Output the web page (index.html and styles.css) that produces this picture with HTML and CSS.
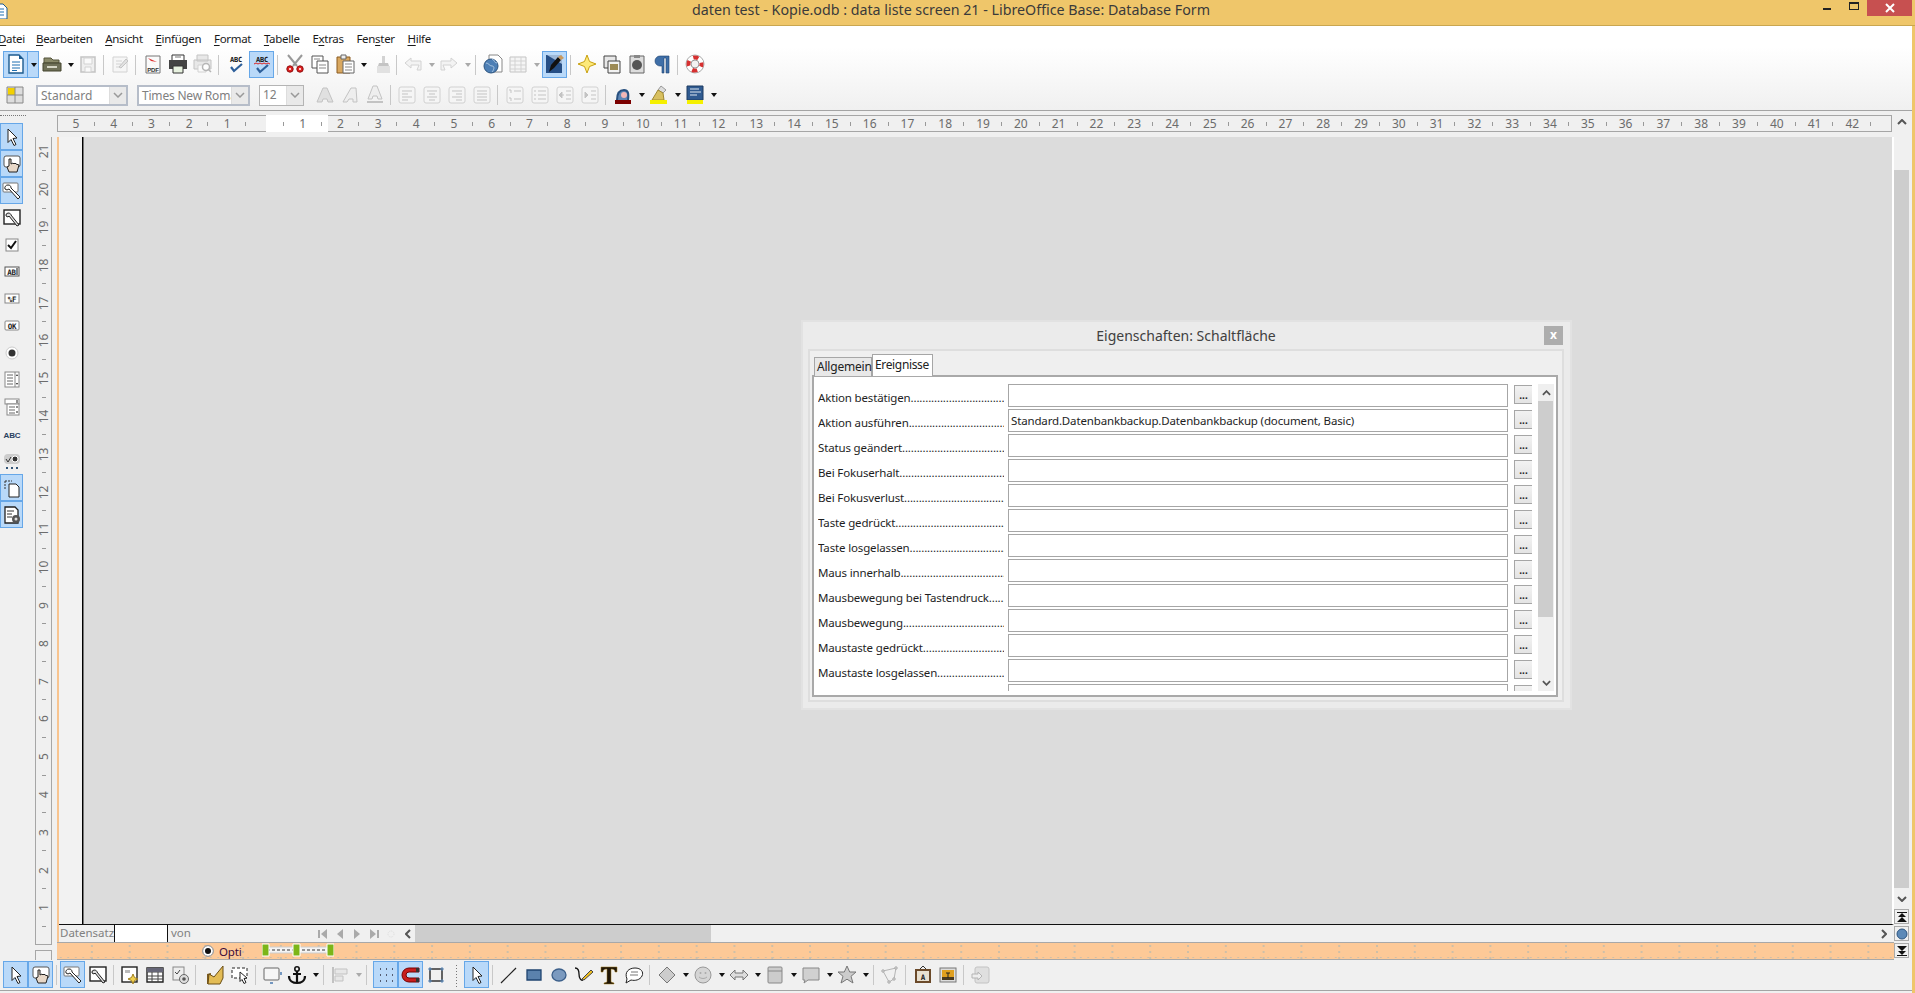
FILE: index.html
```html
<!DOCTYPE html>
<html lang="de">
<head>
    <meta charset="UTF-8" />
    <title>daten test - Kopie.odb : data liste screen 21 - LibreOffice Base: Database Form</title>
    <link rel="stylesheet" href="styles.css">
</head>
<body>
<div class="window">
    <div class="titlebar">
        <svg class="appicon" viewBox="0 0 16 16"><path d="M0 1h11l4 4v11H0z" fill="#fff" stroke="#1d5b8f"/><path d="M2 6h10M2 9h10M2 12h10" stroke="#1d6fb0"/></svg>
        <div class="title">daten test - Kopie.odb : data liste screen 21 - LibreOffice Base: Database Form</div>
        <div class="winctl">
            <span class="min"></span>
            <span class="max"></span>
            <span class="close"><svg viewBox="0 0 10 10" width="10" height="10"><path d="M1 1l8 8M9 1l-8 8" stroke="#fff" stroke-width="2"/></svg></span>
        </div>
    </div>

    <div class="head">
        <div class="menubar">
            <span class="first"><u>D</u>atei</span>
            <span><u>B</u>earbeiten</span>
            <span><u>A</u>nsicht</span>
            <span><u>E</u>infügen</span>
            <span><u>F</u>ormat</span>
            <span><u>T</u>abelle</span>
            <span>E<u>x</u>tras</span>
            <span>Fen<u>s</u>ter</span>
            <span><u>H</u>ilfe</span>
        </div>

        <div class="toolbar row1">
            <span class="btn on"><svg viewBox="0 0 20 20"><path d="M3 1h10l4 4v14H3z" fill="#fff" stroke="#1d5b8f" stroke-width="1.4"/><path d="M13 1l4 4h-4z" fill="#1d5b8f"/><path d="M6 8h8M6 11h8M6 14h8M6 16.500h5" stroke="#1d6fb0"/></svg></span>
            <span class="drop on"><i></i></span>
            <span class="btn"><svg viewBox="0 0 20 20"><path d="M2 4h7l2 2h6v3H2z" fill="#8a8a6a" stroke="#55553c"/><path d="M1 9h18v8H1z" fill="#6f7058" stroke="#45452f"/><path d="M5 12h10v2H5z" fill="#d5d5c5"/></svg></span>
            <span class="drop"><i></i></span>
            <span class="btn off"><svg viewBox="0 0 20 20"><path d="M3 3h14v15H3z" fill="#eee" stroke="#bbb" stroke-width="1.500"/><path d="M6 4h8v6H6zM7 13h6v5H7z" fill="#fafafa" stroke="#ccc"/></svg></span>
            <span class="sep"></span>
            <span class="btn off"><svg viewBox="0 0 20 20"><path d="M3 3h14v15H3z" fill="#f6f6f6" stroke="#ccc"/><path d="M6 7h6M6 10h5M6 13h4" stroke="#ccc"/><path d="M9 13l7-8 2 2-7 7z" fill="#ddd" stroke="#bbb"/></svg></span>
            <span class="sep wide"></span>
            <span class="btn"><svg viewBox="0 0 20 20"><path d="M3 2h14v17H3z" fill="#fafafa" stroke="#777"/><path d="M5 4l9 4-6-1 5 5z" fill="#d33"/><text x="10" y="17.500" class="tiny" text-anchor="middle">PDF</text></svg></span>
            <span class="btn"><svg viewBox="0 0 20 20"><path d="M4 1h12v6H4z" fill="#fff" stroke="#333"/><path d="M1 6h18v9H1z" fill="#444"/><path d="M5 12h10v7H5z" fill="#e8f2e0" stroke="#333"/><path d="M7 3h6" stroke="#777"/></svg></span>
            <span class="btn off"><svg viewBox="0 0 20 20"><path d="M4 1h11v6H4zM1 6h17v9H1z" fill="#e5e5e5" stroke="#bbb"/><path d="M5 11h8v7H5z" fill="#fafafa" stroke="#ccc"/><circle cx="13" cy="13" r="3.500" fill="#fff" stroke="#aaa" stroke-width="1.500"/><path d="M15 15l3 3" stroke="#aaa" stroke-width="1.500"/></svg></span>
            <span class="sep wide"></span>
            <span class="btn"><svg viewBox="0 0 20 20"><text x="10" y="8" class="abc" text-anchor="middle">ABC</text><path d="M5 13l3 4 8-7" fill="none" stroke="#2d5f9a" stroke-width="2.200"/></svg></span>
            <span class="btn on tight"><svg viewBox="0 0 20 20"><text x="10" y="8" class="abc" text-anchor="middle">ABC</text><path d="M2 10l2-1 2 1 2-1 2 1 2-1 2 1 2-1 2 1" fill="none" stroke="#d22"/><path d="M5 14l3 4 8-7" fill="none" stroke="#2d5f9a" stroke-width="2.200"/></svg></span>
            <span class="sep wide"></span>
            <span class="btn"><svg viewBox="0 0 20 20"><path d="M3 1l9 11M17 1L8 12" stroke="#999" stroke-width="2"/><circle cx="5" cy="15" r="3.200" fill="#e02020" stroke="#901010"/><circle cx="15" cy="15" r="3.200" fill="#e02020" stroke="#901010"/><circle cx="5" cy="15" r="1" fill="#fff"/><circle cx="15" cy="15" r="1" fill="#fff"/></svg></span>
            <span class="btn"><svg viewBox="0 0 20 20"><path d="M2 2h11v12H2z" fill="#fff" stroke="#555"/><path d="M7 7h11v12H7z" fill="#fff" stroke="#555"/><path d="M4 5h6M9 11h7M9 14h7" stroke="#888"/></svg></span>
            <span class="btn"><svg viewBox="0 0 20 20"><path d="M2 3h13v16H2z" fill="#d9a860" stroke="#8a5a20"/><path d="M6 1h5v4H6z" fill="#eee" stroke="#666"/><path d="M8 7h11v12H8z" fill="#fff" stroke="#666"/><path d="M10 10h7M10 13h7M10 16h7" stroke="#888"/></svg></span>
            <span class="drop"><i></i></span>
            <span class="btn off ml2"><svg viewBox="0 0 20 20"><path d="M9 2h3v7H9z" fill="#ccc"/><path d="M6 9h9l1 3H5z" fill="#bbb"/><path d="M4 12h13v7H4z" fill="#ddd"/></svg></span>
            <span class="sep thin"></span>
            <span class="btn off"><svg viewBox="0 0 20 20"><path d="M8 4L2 9l6 5v-3h8l-2 5h4V7H8z" fill="#f2f2f2" stroke="#ccc"/></svg></span>
            <span class="drop off"><i></i></span>
            <span class="btn off"><svg viewBox="0 0 20 20"><path d="M12 4l6 5-6 5v-3H4l2 5H2V7h10z" fill="#f2f2f2" stroke="#ccc"/></svg></span>
            <span class="drop off"><i></i></span>
            <span class="sep wide"></span>
            <span class="btn"><svg viewBox="0 0 20 20"><path d="M6 1h9l4 4v13H6z" fill="#fff" stroke="#888"/><circle cx="8" cy="12" r="7" fill="#4d7fb5" stroke="#2d5580"/><path d="M3 9c3 0 3 3 6 3s2 4 0 6M9 5c3 1 2 4 5 4" fill="none" stroke="#a8c4e0"/></svg></span>
            <span class="btn off"><svg viewBox="0 0 20 20"><path d="M2 3h16v15H2z" fill="#f4f4f4" stroke="#bbb"/><path d="M2 7h16M2 11h16M2 15h16M7 3v15M13 3v15" stroke="#ccc"/></svg></span>
            <span class="drop off"><i></i></span>
            <span class="btn on tight"><svg viewBox="0 0 20 20"><path d="M1 1h16v18H1z" fill="#264f86"/><path d="M2 1h15v9z" fill="#9db8d8"/><path d="M4 18l2-7 7-8 3 3-7 8z" fill="#111"/><path d="M13 3l3-2 3 3-3 2z" fill="#c89a60"/></svg></span>
            <span class="sep"></span>
            <span class="btn"><svg viewBox="0 0 20 20"><path d="M10 1l2.500 6.500L19 10l-6.500 2.500L10 19l-2.500-6.500L1 10l6.500-2.500z" fill="#fde97a" stroke="#c8a010"/></svg></span>
            <span class="btn"><svg viewBox="0 0 20 20"><path d="M2 2h12v12H2z" fill="#e8e8e8" stroke="#444"/><path d="M6 7h12v12H6z" fill="#f2f2f2" stroke="#444"/><path d="M8 10h8v6H8z" fill="#9c8a55"/></svg></span>
            <span class="btn"><svg viewBox="0 0 20 20"><path d="M3 2h14v17H3z" fill="#ddd" stroke="#666"/><path d="M7 1h6v3H7z" fill="#888"/><circle cx="10" cy="11" r="5" fill="#555"/></svg></span>
            <span class="btn"><svg viewBox="0 0 20 20"><path d="M10 2H8a5 5 0 0 0 0 10h2v7h2V4h2v15h3V2z" fill="#3f6fa8" stroke="#1d3f6e" stroke-width=".6"/></svg></span>
            <span class="sep wide"></span>
            <span class="btn"><svg viewBox="0 0 20 20"><circle cx="10" cy="10" r="9" fill="#fff" stroke="#aaa"/><circle cx="10" cy="10" r="6.500" fill="none" stroke="#d63030" stroke-width="4" stroke-dasharray="5.200 5" stroke-dashoffset="2.500"/><circle cx="10" cy="10" r="4" fill="#f2f2f2" stroke="#999"/></svg></span>
        </div>

        <div class="toolbar row2">
            <span class="btn"><svg viewBox="0 0 20 20"><path d="M2 2h16v16H2z" fill="#ddd" stroke="#888"/><path d="M3 3h7v7H3z" fill="#f2d000"/><path d="M10 2v16M2 10h16" stroke="#888"/></svg></span>
            <div class="combo w1"><span>Standard</span><b><svg viewBox="0 0 10 6" width="10" height="6"><path d="M1 1l4 4 4-4" fill="none" stroke="#999" stroke-width="1.500"/></svg></b></div>
            <div class="combo w2"><span>Times New Roman</span><b><svg viewBox="0 0 10 6" width="10" height="6"><path d="M1 1l4 4 4-4" fill="none" stroke="#999" stroke-width="1.500"/></svg></b></div>
            <div class="combo w3"><span>12</span><b><svg viewBox="0 0 10 6" width="10" height="6"><path d="M1 1l4 4 4-4" fill="none" stroke="#999" stroke-width="1.500"/></svg></b></div>
            <span class="btn off"><svg viewBox="0 0 20 20"><path d="M8 3h4l6 14h-5l-1-3H8l-1 3H2z" fill="#ddd" stroke="#bbb"/></svg></span>
            <span class="btn off"><svg viewBox="0 0 20 20"><path d="M11 3h5l1 14h-4v-3H9l-2 3H3z" fill="#eee" stroke="#bbb"/></svg></span>
            <span class="btn off"><svg viewBox="0 0 20 20"><path d="M8 1h4l5 13h-4l-1-3H8l-1 3H3z" fill="#eee" stroke="#bbb"/><path d="M2 17h16" stroke="#bbb" stroke-width="2"/></svg></span>
            <span class="sep"></span>
            <span class="btn off"><svg viewBox="0 0 20 20"><rect x="2" y="2" width="16" height="16" rx="2" fill="#f6f6f6" stroke="#ccc"/><path d="M5 6h10M5 9h6M5 12h10M5 15h6" stroke="#bbb"/></svg></span>
            <span class="btn off"><svg viewBox="0 0 20 20"><rect x="2" y="2" width="16" height="16" rx="2" fill="#f6f6f6" stroke="#ccc"/><path d="M5 6h10M7 9h6M5 12h10M7 15h6" stroke="#bbb"/></svg></span>
            <span class="btn off"><svg viewBox="0 0 20 20"><rect x="2" y="2" width="16" height="16" rx="2" fill="#f6f6f6" stroke="#ccc"/><path d="M5 6h10M9 9h6M5 12h10M9 15h6" stroke="#bbb"/></svg></span>
            <span class="btn off"><svg viewBox="0 0 20 20"><rect x="2" y="2" width="16" height="16" rx="2" fill="#f6f6f6" stroke="#ccc"/><path d="M5 6h10M5 9h10M5 12h10M5 15h10" stroke="#bbb"/></svg></span>
            <span class="sep wide"></span>
            <span class="btn off"><svg viewBox="0 0 20 20"><rect x="2" y="2" width="16" height="16" rx="2" fill="#f6f6f6" stroke="#ccc"/><path d="M9 6h7M9 14h7M4 5h2v3M4 13h2v3" fill="none" stroke="#bbb"/></svg></span>
            <span class="btn off"><svg viewBox="0 0 20 20"><rect x="2" y="2" width="16" height="16" rx="2" fill="#f6f6f6" stroke="#ccc"/><path d="M8 6h8M8 10h8M8 14h8M4 6h2M4 10h2M4 14h2" stroke="#bbb"/></svg></span>
            <span class="btn off"><svg viewBox="0 0 20 20"><rect x="2" y="2" width="16" height="16" rx="2" fill="#f6f6f6" stroke="#ccc"/><path d="M9 10l-5 0M4 10l3-3v6z" fill="#bbb" stroke="#bbb"/><path d="M11 6h5M11 10h5M11 14h5" stroke="#bbb"/></svg></span>
            <span class="btn off"><svg viewBox="0 0 20 20"><rect x="2" y="2" width="16" height="16" rx="2" fill="#f6f6f6" stroke="#ccc"/><path d="M8 10l-3-3v6z" fill="#bbb" stroke="#bbb"/><path d="M11 6h5M11 10h5M11 14h5" stroke="#bbb"/></svg></span>
            <span class="sep gap"></span>
            <span class="btn"><svg viewBox="0 0 20 20"><path d="M4 15c0-7 3-10 7-10s5 3 4 10" fill="#5d86b5" stroke="#28507f" stroke-width="2"/><circle cx="11" cy="10" r="3" fill="#f2b6b6"/><path d="M2 15h16v4H2z" fill="#7b0000"/></svg></span>
            <span class="drop"><i></i></span>
            <span class="btn"><svg viewBox="0 0 20 20"><path d="M12 1l5 4-3 3-5-3z" fill="#ddd" stroke="#999"/><path d="M9 5l5 3 1 7H3z" fill="#d8c060" stroke="#a08830"/><path d="M1 15h17v4H1z" fill="#f5f000"/></svg></span>
            <span class="drop"><i></i></span>
            <span class="btn"><svg viewBox="0 0 20 20"><path d="M2 1h16v14H2z" fill="#2f5a90" stroke="#1d3a60"/><path d="M5 4h9M5 7h11M5 10h7" stroke="#dfe8f2"/><path d="M2 15h16v4H2z" fill="#f5f000"/></svg></span>
            <span class="drop"><i></i></span>
        </div>
    </div>

    <div class="upper">
        <div class="leftcol">
            <div class="sidetools">
                <div class="handle"></div>
                <span class="sbtn on"><svg viewBox="0 0 20 20"><path d="M6 2l9 9-4 .5 3 6-2 1-3-6-3 3z" fill="#fff" stroke="#222"/></svg></span>
                <span class="sbtn on"><svg viewBox="0 0 20 20"><rect x="2" y="2" width="16" height="11" rx="2" fill="#fff" stroke="#555"/><path d="M7 5v7l-2 1 2 5h8l2-7-3-1-1-1-1 1-1-1-2 1V5z" fill="#e8d8c8" stroke="#222"/></svg></span>
                <span class="sbtn on"><svg viewBox="0 0 20 20"><rect x="1" y="2" width="15" height="9" rx="1" fill="#fff" stroke="#777"/><path d="M6 4a3 3 0 0 0-3 4l2 1 2-1 9 10 2-2-9-9c0-2-1-3-3-3z" fill="#fff" stroke="#222"/></svg></span>
                <span class="sbtn"><svg viewBox="0 0 20 20"><rect x="2" y="2" width="16" height="14" fill="#fff" stroke="#222" stroke-width="1.400"/><path d="M6 5a2.500 2.500 0 0 0-2 3l2 1 1-1 8 10 2-1-8-10c0-1-1-2-3-2z" fill="#ddd" stroke="#222"/></svg></span>
                <span class="sbtn"><svg viewBox="0 0 20 20"><rect x="4" y="4" width="12" height="12" fill="#fff" stroke="#888"/><path d="M6 10l3 3 5-7" fill="none" stroke="#111" stroke-width="2"/></svg></span>
                <span class="sbtn"><svg viewBox="0 0 20 20"><rect x="3" y="5" width="14" height="9" fill="#fff" stroke="#555"/><text x="9.500" y="13" class="ctl" text-anchor="middle">AB</text><path d="M15 6v7" stroke="#111"/></svg></span>
                <span class="sbtn"><svg viewBox="0 0 20 20"><rect x="3" y="5" width="14" height="9" fill="#fff" stroke="#888"/><text x="10" y="13" class="ctl" text-anchor="middle">%F</text></svg></span>
                <span class="sbtn"><svg viewBox="0 0 20 20"><rect x="3" y="5" width="14" height="9" rx="1" fill="#fff" stroke="#888"/><text x="10" y="13" class="ctl" text-anchor="middle">OK</text></svg></span>
                <span class="sbtn"><svg viewBox="0 0 20 20"><circle cx="10" cy="10" r="6" fill="#fff" stroke="#ccc"/><circle cx="10" cy="10" r="3.500" fill="#333"/></svg></span>
                <span class="sbtn"><svg viewBox="0 0 20 20"><rect x="3" y="2" width="14" height="15" fill="#fff" stroke="#888"/><path d="M5 5h6M5 8h6M5 11h6M5 14h6" stroke="#666"/><path d="M13 2v15" stroke="#888"/><path d="M15 4l-1 2h2zM15 15l-1-2h2z" fill="#222"/></svg></span>
                <span class="sbtn"><svg viewBox="0 0 20 20"><rect x="3" y="2" width="14" height="5" fill="#fff" stroke="#888"/><rect x="5" y="7" width="12" height="11" fill="#fff" stroke="#888"/><path d="M7 10h6M7 13h6M7 16h6" stroke="#666"/><path d="M15 3v3M15 9v2M15 14v2" stroke="#222"/></svg></span>
                <span class="sbtn"><svg viewBox="0 0 20 20"><text x="10" y="14" class="abclbl" text-anchor="middle">ABC</text></svg></span>
                <span class="sbtn"><svg viewBox="0 0 20 20"><rect x="2" y="3" width="16" height="10" rx="4" fill="#ccc"/><circle cx="13" cy="8" r="3" fill="#333" stroke="#fff"/><path d="M4 8l2 3 3-5" fill="none" stroke="#333"/><path d="M4 17h2M9 17h2M14 17h2" stroke="#335577" stroke-width="2"/></svg></span>
                <span class="sbtn on"><svg viewBox="0 0 20 20"><path d="M3 3h7" stroke="#333" stroke-dasharray="2 1"/><path d="M3 3v9" stroke="#333" stroke-dasharray="2 1"/><path d="M7 6h7l3 3v10H7z" fill="#fff" stroke="#222"/></svg></span>
                <span class="sbtn on"><svg viewBox="0 0 20 20"><path d="M3 2h10l3 3v13H3z" fill="#fff" stroke="#222" stroke-width="1.300"/><path d="M5 6h7M5 9h5M5 12h5" stroke="#333"/><circle cx="14" cy="14" r="4" fill="#555"/><circle cx="14" cy="14" r="1.500" fill="#ddd"/></svg></span>
            </div>
            <div class="vruler-wrap">
                <div class="vruler">
                    <div><span>21</span></div><div><span>20</span></div><div><span>19</span></div><div><span>18</span></div><div><span>17</span></div>
                    <div><span>16</span></div><div><span>15</span></div><div><span>14</span></div><div><span>13</span></div><div><span>12</span></div>
                    <div><span>11</span></div><div><span>10</span></div><div><span>9</span></div><div><span>8</span></div><div><span>7</span></div>
                    <div><span>6</span></div><div><span>5</span></div><div><span>4</span></div><div><span>3</span></div><div><span>2</span></div>
                    <div><span>1</span></div>
                </div>
                <div class="vruler-end"></div>
            </div>
        </div>

        <div class="maincol">
            <div class="hruler-row">
                <div class="hruler">
                    <div class="hmargin"></div>
                    <span>5</span><span>4</span><span>3</span><span>2</span><span>1</span><span></span>
                    <span>1</span><span>2</span><span>3</span><span>4</span><span>5</span><span>6</span><span>7</span><span>8</span><span>9</span><span>10</span>
                    <span>11</span><span>12</span><span>13</span><span>14</span><span>15</span><span>16</span><span>17</span><span>18</span><span>19</span><span>20</span>
                    <span>21</span><span>22</span><span>23</span><span>24</span><span>25</span><span>26</span><span>27</span><span>28</span><span>29</span><span>30</span>
                    <span>31</span><span>32</span><span>33</span><span>34</span><span>35</span><span>36</span><span>37</span><span>38</span><span>39</span><span>40</span>
                    <span>41</span><span>42</span>
                </div>
            </div>

            <div class="docpane">
                <div class="canvas">
                    <div class="gutter"></div>
                    <div class="sheet"></div>

                    <div class="dialog">
                        <div class="dlg-title">
                            <span>Eigenschaften: Schaltfläche</span>
                            <b class="dlg-close">x</b>
                        </div>
                        <div class="dlg-panel">
                            <div class="tabs">
                                <span class="tab">Allgemein</span>
                                <span class="tab active">Ereignisse</span>
                            </div>
                            <div class="tabbody">
                                <div class="rows">
                                    <div class="row"><label>Aktion bestätigen</label><input type="text" value=""><button>...</button></div>
                                    <div class="row"><label>Aktion ausführen</label><input type="text" value="Standard.Datenbankbackup.Datenbankbackup (document, Basic)"><button>...</button></div>
                                    <div class="row"><label>Status geändert</label><input type="text" value=""><button>...</button></div>
                                    <div class="row"><label>Bei Fokuserhalt</label><input type="text" value=""><button>...</button></div>
                                    <div class="row"><label>Bei Fokusverlust</label><input type="text" value=""><button>...</button></div>
                                    <div class="row"><label>Taste gedrückt</label><input type="text" value=""><button>...</button></div>
                                    <div class="row"><label>Taste losgelassen</label><input type="text" value=""><button>...</button></div>
                                    <div class="row"><label>Maus innerhalb</label><input type="text" value=""><button>...</button></div>
                                    <div class="row"><label>Mausbewegung bei Tastendruck</label><input type="text" value=""><button>...</button></div>
                                    <div class="row"><label>Mausbewegung</label><input type="text" value=""><button>...</button></div>
                                    <div class="row"><label>Maustaste gedrückt</label><input type="text" value=""><button>...</button></div>
                                    <div class="row"><label>Maustaste losgelassen</label><input type="text" value=""><button>...</button></div>
                                    <div class="row"><label class="blank"></label><input type="text" value=""><button></button></div>
                                </div>
                                <div class="dlg-scroll">
                                    <svg class="dlg-arrow" viewBox="0 0 10 6"><path d="M1 5l4-4 4 4" fill="none" stroke="#555" stroke-width="2"/></svg>
                                    <div class="dlg-thumb"></div>
                                    <svg class="dlg-arrow down" viewBox="0 0 10 6"><path d="M1 1l4 4 4-4" fill="none" stroke="#555" stroke-width="2"/></svg>
                                </div>
                            </div>
                        </div>
                    </div>
                </div>

                <div class="hbar">
                    <div class="recbar">
                        <span class="rec-label">Datensatz</span>
                        <span class="rec-input"></span>
                        <span class="rec-von">von</span>
                        <span class="rec-nav">
                            <svg viewBox="0 0 12 12"><path d="M2 2v8" stroke="#aaa" stroke-width="2"/><path d="M10 1v10L4 6z" fill="#aaa"/></svg>
                            <svg viewBox="0 0 12 12"><path d="M9 1v10L3 6z" fill="#aaa"/></svg>
                            <svg viewBox="0 0 12 12"><path d="M3 1v10l6-5z" fill="#aaa"/></svg>
                            <svg viewBox="0 0 12 12"><path d="M10 2v8" stroke="#aaa" stroke-width="2"/><path d="M2 1v10l6-5z" fill="#aaa"/></svg>
                            <svg viewBox="0 0 12 12"><circle cx="6" cy="6" r="3" fill="none" stroke="#ddd" stroke-dasharray="1 1"/></svg>
                        </span>
                    </div>
                    <div class="hscroll">
                        <svg viewBox="0 0 6 10" width="6" height="10"><path d="M5 1L1 5l4 4" fill="none" stroke="#555" stroke-width="2"/></svg>
                        <div class="hthumb"></div>
                        <svg viewBox="0 0 6 10" width="6" height="10" class="hright"><path d="M1 1l4 4-4 4" fill="none" stroke="#555" stroke-width="2"/></svg>
                    </div>
                </div>
            </div>

            <div class="strip">
                <span class="radio"></span>
                <span class="opti">Opti</span>
                <svg class="slider" viewBox="0 0 72 14" width="72" height="14">
                    <path d="M3 4h66v6H3z" fill="#f4f4f4" stroke="#ccc"/>
                    <path d="M5 7h62" stroke="#333" stroke-dasharray="3 2"/>
                    <path d="M0 1h7v12H0zM31 1h7v12h-7zM65 1h7v12h-7z" fill="#7cb518" stroke="#fff"/>
                </svg>
            </div>
        </div>

        <div class="vscroll">
            <svg class="up" viewBox="0 0 10 6" width="10" height="6"><path d="M1 5l4-4 4 4" fill="none" stroke="#555" stroke-width="2"/></svg>
            <div class="vthumb"></div>
            <svg class="dn" viewBox="0 0 10 6" width="10" height="6"><path d="M1 1l4 4 4-4" fill="none" stroke="#555" stroke-width="2"/></svg>
            <span class="pagebtn"><svg viewBox="0 0 12 12" width="12" height="12"><path d="M1 1h10v1H1zM6 2l4 4H2zM6 6l5 5H1z" fill="#111"/></svg></span>
            <span class="pagebtn"><svg viewBox="0 0 12 12" width="12" height="12"><circle cx="6" cy="6" r="5" fill="#5d8ab8" stroke="#2d5580"/></svg></span>
            <span class="pagebtn"><svg viewBox="0 0 12 12" width="12" height="12"><path d="M1 1h10L6 6zM2 6h8l-4 4zM1 10h10v1H1z" fill="#111"/></svg></span>
        </div>
    </div>

    <div class="toolbar bottom">
        <span class="btn on"><svg viewBox="0 0 20 20"><path d="M6 2l9 9-4 .5 3 6-2 1-3-6-3 3z" fill="#fff" stroke="#222"/></svg></span>
        <span class="btn on"><svg viewBox="0 0 20 20"><rect x="2" y="2" width="16" height="11" rx="2" fill="#fff" stroke="#555"/><path d="M7 5v7l-2 1 2 5h8l2-7-3-1-1-1-1 1-1-1-2 1V5z" fill="#e8d8c8" stroke="#222"/></svg></span>
        <span class="sep"></span>
        <span class="btn on"><svg viewBox="0 0 20 20"><rect x="1" y="2" width="15" height="9" rx="1" fill="#fff" stroke="#777"/><path d="M6 4a3 3 0 0 0-3 4l2 1 2-1 9 10 2-2-9-9c0-2-1-3-3-3z" fill="#fff" stroke="#222"/></svg></span>
        <span class="btn"><svg viewBox="0 0 20 20"><rect x="2" y="2" width="16" height="14" fill="#fff" stroke="#222" stroke-width="1.400"/><path d="M6 5a2.500 2.500 0 0 0-2 3l2 1 1-1 8 10 2-1-8-10c0-1-1-2-3-2z" fill="#ddd" stroke="#222"/></svg></span>
        <span class="sep"></span>
        <span class="btn"><svg viewBox="0 0 20 20"><rect x="2" y="2" width="15" height="15" fill="#fff" stroke="#222" stroke-width="1.400"/><path d="M5 5h5v3H5z" fill="#bbb"/><path d="M13 9l1.500 3.500L18 14l-3.500 1.500L13 19l-1.500-3.500L8 14l3.500-1.500z" fill="#f0d050" stroke="#a08020"/></svg></span>
        <span class="btn"><svg viewBox="0 0 20 20"><path d="M2 3h16v14H2z" fill="#fff" stroke="#222" stroke-width="1.400"/><path d="M2 7h16M2 11h16M2 14h16M7 3v14M13 3v14" stroke="#444"/><path d="M2 3h16v4H2z" fill="#667"/></svg></span>
        <span class="btn"><svg viewBox="0 0 20 20"><rect x="3" y="2" width="11" height="13" fill="#eee" stroke="#888"/><path d="M5 7l2 2 3-4" fill="none" stroke="#444"/><circle cx="14" cy="14" r="4.500" fill="#ddd" stroke="#666"/><circle cx="14" cy="14" r="1.800" fill="#555"/></svg></span>
        <span class="sep"></span>
        <span class="btn ml3"><svg viewBox="0 0 20 20"><path d="M2 9l4-1 0 11H2z" fill="#7a5a20"/><path d="M4 9l5 3 9-11v12l-3 6H3z" fill="#e3bc55" stroke="#6b4f16"/></svg></span>
        <span class="btn"><svg viewBox="0 0 20 20"><path d="M2 3h15v10H2z" fill="#fff" stroke="#222" stroke-dasharray="3 2"/><path d="M10 7l7 6-3 .5 2 4-2 1-2-4-2 2z" fill="#fff" stroke="#222"/></svg></span>
        <span class="sep"></span>
        <span class="btn"><svg viewBox="0 0 20 20"><rect x="2" y="3" width="15" height="12" rx="1" fill="#f6f6f6" stroke="#666"/><path d="M19 7v3M8 18h3" stroke="#4a7ab0" stroke-width="1.500"/></svg></span>
        <span class="btn"><svg viewBox="0 0 20 20"><circle cx="10" cy="4" r="2.200" fill="none" stroke="#111" stroke-width="1.600"/><path d="M10 6v12M6 9h8" stroke="#111" stroke-width="2.200"/><path d="M2 11c0 5 4 7 8 7s8-2 8-7" fill="none" stroke="#111" stroke-width="2.200"/></svg></span>
        <span class="drop"><i></i></span>
        <span class="sep"></span>
        <span class="btn off"><svg viewBox="0 0 20 20"><path d="M3 2v16" stroke="#aaa" stroke-width="1.500"/><path d="M5 4h12v5H5zM5 11h8v5H5z" fill="#e6e6e6" stroke="#bbb"/></svg></span>
        <span class="drop off"><i></i></span>
        <span class="sep"></span>
        <span class="btn on ml3"><svg viewBox="0 0 20 20"><path d="M4 4h1M10 4h1M16 4h1M4 10h1M10 10h1M16 10h1M4 16h1M10 16h1M16 16h1" stroke="#334" stroke-width="1.500"/></svg></span>
        <span class="btn on"><svg viewBox="0 0 20 20"><path d="M18 3H8a7 7 0 0 0 0 14h10v-4H8a3 3 0 0 1 0-6h10z" fill="#c81e1e" stroke="#700"/><path d="M15 3h3v4h-3zM15 13h3v4h-3z" fill="#333"/></svg></span>
        <span class="btn"><svg viewBox="0 0 20 20"><path d="M4 4h12v12H4z" fill="none" stroke="#333" stroke-width="1.500"/><path d="M2 4h4M14 4h4M2 16h4M14 16h4M4 2v4M4 14v4M16 2v4M16 14v4" stroke="#5a88b8"/></svg></span>
        <span class="grip"></span>
        <span class="btn on"><svg viewBox="0 0 20 20"><path d="M6 2l9 9-4 .5 3 6-2 1-3-6-3 3z" fill="#fff" stroke="#222"/></svg></span>
        <span class="sep"></span>
        <span class="btn"><svg viewBox="0 0 20 20"><path d="M2 18L17 3" stroke="#222" stroke-width="1.200"/></svg></span>
        <span class="btn"><svg viewBox="0 0 20 20"><path d="M3 5h14v10H3z" fill="#5b82ad" stroke="#1f4470" stroke-width="1.300"/></svg></span>
        <span class="btn"><svg viewBox="0 0 20 20"><ellipse cx="10" cy="10" rx="7" ry="6" fill="#7b9abf" stroke="#3b5f8a" stroke-width="1.300"/></svg></span>
        <span class="btn"><svg viewBox="0 0 20 20"><path d="M1 3c3 0 4 2 4 6s2 7 4 6" fill="none" stroke="#111" stroke-width="1.300"/><path d="M8 14l9-9 2 2-9 8z" fill="#f0c020" stroke="#444"/></svg></span>
        <span class="btn"><svg viewBox="0 0 20 20"><path d="M2 2h16v5h-2c0-2-1-3-4-3v13l3 1v1H5v-1l3-1V4C5 4 4 5 4 7H2z" fill="#1f1608" stroke="#a07818" stroke-width=".5"/></svg></span>
        <span class="btn"><svg viewBox="0 0 20 20"><path d="M3 14c-3-7 2-11 8-11s9 4 7 8-7 5-11 4l-5 3z" fill="#fff" stroke="#222"/><path d="M7 7h7M6 10h8" stroke="#777"/></svg></span>
        <span class="sep wide"></span>
        <span class="btn"><svg viewBox="0 0 20 20"><path d="M10 2l8 8-8 8-8-8z" fill="#ccc" stroke="#777"/></svg></span>
        <span class="drop"><i></i></span>
        <span class="btn"><svg viewBox="0 0 20 20"><circle cx="10" cy="10" r="8" fill="#d5d5d5" stroke="#999"/><circle cx="7.500" cy="8" r="1" fill="#aaa"/><circle cx="12.500" cy="8" r="1" fill="#aaa"/><path d="M6 12c2 2 6 2 8 0" fill="none" stroke="#aaa"/></svg></span>
        <span class="drop"><i></i></span>
        <span class="btn"><svg viewBox="0 0 20 20"><path d="M1 10l5-5v3h8V5l5 5-5 5v-3H6v3z" fill="#ddd" stroke="#777"/></svg></span>
        <span class="drop"><i></i></span>
        <span class="btn"><svg viewBox="0 0 20 20"><rect x="3" y="2" width="14" height="16" rx="1" fill="#ccc" stroke="#888"/><path d="M3 6h14" stroke="#888"/></svg></span>
        <span class="drop"><i></i></span>
        <span class="btn"><svg viewBox="0 0 20 20"><path d="M2 3h16v12H7l-4 3 1-3H2z" fill="#d0d0d0" stroke="#888"/></svg></span>
        <span class="drop"><i></i></span>
        <span class="btn"><svg viewBox="0 0 20 20"><path d="M10 1l2.700 6H19l-5 4.300L16 18l-6-3.800L4 18l2-6.700L1 7h6.300z" fill="#ccc" stroke="#777"/></svg></span>
        <span class="drop"><i></i></span>
        <span class="sep"></span>
        <span class="btn off"><svg viewBox="0 0 20 20"><path d="M3 6l13-3-2 11-5 3z" fill="none" stroke="#aaa"/><path d="M2 5h2v2H2zM15 2h2v2h-2zM13 13h2v2h-2zM8 16h2v2H8z" fill="#fff" stroke="#999"/></svg></span>
        <span class="sep wide"></span>
        <span class="btn"><svg viewBox="0 0 20 20"><path d="M7 4l3-3 3 3" fill="none" stroke="#333"/><rect x="3" y="5" width="14" height="12" fill="#e8e0d0" stroke="#6b4a2a" stroke-width="2"/><text x="10" y="15" class="ctl" text-anchor="middle">A</text></svg></span>
        <span class="btn"><svg viewBox="0 0 20 20"><rect x="2" y="3" width="16" height="14" fill="#ddd" stroke="#777"/><path d="M4 5h12v10H4z" fill="#e0a020"/><path d="M4 12h12v3H4z" fill="#4a3a20"/><path d="M10 13V8M8 8h4" stroke="#222"/></svg></span>
        <span class="sep wide"></span>
        <span class="btn off"><svg viewBox="0 0 20 20"><rect x="4" y="2" width="14" height="16" rx="2" fill="#ddd" stroke="#bbb"/><path d="M1 9h6V7l4 4-4 4v-2H1z" fill="#eee" stroke="#aaa"/></svg></span>
    </div>
    <div class="foot"></div>
</div>
</body>
</html>
```

FILE: styles.css
```css
* {
    margin: 0;
    padding: 0;
    box-sizing: border-box;
}
html, body {
    height: 100%;
    overflow: hidden;
    font-family: "Noto Sans", "Open Sans", sans-serif;
    font-size: 11.500px;
    letter-spacing: -.15px;
    color: #222;
    background: #f0f0f0;
}
.window {
    width: 1915px;
    height: 993px;
    border-right: 3px solid #efc66a;
    display: flex;
    flex-direction: column;
}
svg {
    display: block;
}

/* title bar */
.titlebar {
    height: 26px;
    margin-right: -3px;
    background: #efc66a;
    border-bottom: 1px solid #c9a650;
    display: flex;
    position: relative;
}
.appicon {
    width: 16px;
    height: 16px;
    margin: 3px 0 0 -8px;
}
.title {
    flex: 1;
    text-align: center;
    font-size: 14.250px;
    letter-spacing: 0;
    line-height: 20px;
    padding-left: 71px;
    color: #3a3a3a;
}
.winctl {
    display: flex;
    width: 92px;
    height: 16px;
    padding-right: 3px;
}
.min {
    width: 8px;
    height: 2px;
    margin: 8px 18px 0 0;
    background: #222;
}
.max {
    width: 10px;
    height: 8px;
    margin: 2px 8px 0 0;
    border: 1px solid #222;
    border-top-width: 2px;
}
.close {
    width: 45px;
    background: #c75050;
    display: flex;
    align-items: center;
    justify-content: center;
}

/* menu + toolbars */
.head {
    background: linear-gradient(#fff 0%, #fff 25%, #f0f0f0 100%);
}
.menubar {
    height: 24px;
    display: flex;
    align-items: center;
    letter-spacing: -.3px;
    color: #1a1a1a;
}
.menubar u {
    text-underline-offset: 2px;
}
.menubar span {
    margin-right: 12.700px;
}
.menubar .first {
    width: 26px;
    margin: 0 12px 0 -2px;
}
.toolbar {
    display: flex;
}
.row1 {
    height: 32px;
    padding: 1px 0 0 3px;
}
.row1 .btn svg {
    margin-top: -2px;
}
.row2 {
    height: 28px;
    padding: 0 0 2px 2px;
    align-items: center;
}
.btn {
    width: 25px;
    height: 27px;
    flex: none;
    display: flex;
    align-items: center;
    justify-content: center;
    border: 1px solid transparent;
}
.btn svg {
    width: 20px;
    height: 20px;
}
.on {
    background: #b9d9f9;
    border: 1px solid #66a7e8;
}
.off svg {
    opacity: .85;
}
.tiny {
    font: bold 6px "Liberation Sans", sans-serif;
    fill: #333;
}
.abc {
    font: bold 7px "DejaVu Sans Mono", monospace;
    fill: #111;
}
.ctl {
    font: bold 7.500px "DejaVu Sans Mono", monospace;
    fill: #222;
}
.abclbl {
    font: bold 8px "Liberation Sans", sans-serif;
    fill: #27405f;
}
.drop {
    width: 11px;
    height: 27px;
    flex: none;
    display: flex;
    align-items: center;
    justify-content: center;
    padding-left: 2px;
}
.drop.on {
    border-left: none;
}
.drop i {
    width: 0;
    height: 0;
    border: 3.500px solid transparent;
    border-top: 4px solid #111;
    border-bottom: none;
}
.drop.off i {
    border-top-color: #aaa;
}
.sep {
    width: 1px;
    height: 20px;
    margin: 4px 3px 0;
    background: #c8c8c8;
    flex: none;
}
.sep.wide {
    margin-right: 4px;
}
.sep.thin {
    margin-left: 1px;
    margin-right: 3px;
}
.row2 .sep {
    margin-top: 0;
}
.row2 .sep.gap {
    margin: 0 4px 0 3px;
}
.row2 .btn,
.row2 .drop {
    height: 24px;
}
.tight {
    margin-left: 1px;
}
.ml2 {
    margin-left: 2px;
}
.ml3 {
    margin-left: 3px;
}

/* font / style combos */
.combo {
    height: 21px;
    display: flex;
    background: #fff;
    border: 2px solid #b6bdc9;
    color: #808080;
    line-height: 17px;
    font-size: 12px;
    letter-spacing: 0;
    overflow: hidden;
    flex: none;
}
.combo span {
    padding-left: 3px;
    white-space: nowrap;
    flex: 1;
    overflow: hidden;
}
.combo b {
    width: 17px;
    flex: none;
    background: #e9e9e9;
    border-left: 1px solid #ddd;
    display: flex;
    align-items: center;
    justify-content: center;
}
.w1 {
    width: 92px;
    margin-left: 9px;
}
.w2 {
    width: 113px;
    margin-left: 9px;
    letter-spacing: -.2px;
}
.w3 {
    width: 45px;
    margin: 0 8px 0 9px;
    border: 1px solid #b4b4b4;
}

/* everything between toolbars and bottom bar */
.upper {
    height: 850px;
    display: flex;
    border-top: 1px solid #a4a4a4;
}
.leftcol {
    width: 57px;
    flex: none;
    display: flex;
}
.sidetools {
    width: 35px;
    flex: none;
}
.handle {
    width: 26px;
    height: 8px;
    margin-top: 4px;
    border-top: 1px dotted #777;
}
.sbtn {
    width: 23px;
    height: 27px;
    display: flex;
    align-items: center;
    justify-content: center;
    border: 1px solid transparent;
}
.sbtn.on {
    border-color: #66a7e8;
}
.sbtn svg {
    width: 20px;
    height: 20px;
}

/* vertical ruler */
.vruler-wrap {
    width: 22px;
    padding-top: 26px;
    display: flex;
    flex-direction: column;
}
.vruler {
    width: 17px;
    height: 808px;
    border: 1px solid #a6a6a6;
    border-width: 0 1px 1px;
    overflow: hidden;
    flex: none;
    background: #f0f0f0;
}
.vruler div {
    height: 37.800px;
    position: relative;
    display: flex;
    align-items: center;
    justify-content: center;
    color: #6c6c6c;
    font-size: 12px;
    letter-spacing: 0;
}
.vruler div:first-child {
    margin-top: -4px;
}
.vruler span {
    transform: rotate(-90deg);
}
.vruler div::after {
    content: "";
    position: absolute;
    left: 6px;
    bottom: 0;
    width: 4px;
    height: 1px;
    background: #999;
}
.vruler-end {
    width: 17px;
    flex: 1;
    margin-top: 5px;
    border: 1px solid #a6a6a6;
    border-bottom: none;
}

/* horizontal ruler */
.maincol {
    width: 1837px;
    flex: none;
    display: flex;
    flex-direction: column;
}
.hruler-row {
    height: 26px;
    padding-top: 4px;
    flex: none;
}
.hruler {
    width: 1835px;
    height: 17px;
    border: 1px solid #a6a6a6;
    display: flex;
    position: relative;
    background: #f0f0f0;
}
.hmargin {
    position: absolute;
    left: 208px;
    top: -1px;
    bottom: -1px;
    width: 62px;
    background: #fff;
}
.hruler span {
    width: 37.800px;
    flex: none;
    position: relative;
    text-align: center;
    color: #6c6c6c;
    font-size: 12px;
    letter-spacing: 0;
    line-height: 15px;
}
.hruler span:first-of-type {
    margin-left: -1px;
}
.hruler span::after {
    content: "";
    position: absolute;
    right: 0;
    top: 6px;
    width: 1px;
    height: 4px;
    background: #999;
}

/* document area */
.docpane {
    flex: 1;
    display: flex;
    flex-direction: column;
    border-left: 2px solid #f8c48f;
    min-height: 0;
}
.canvas {
    flex: 1;
    display: flex;
    position: relative;
    border-right: 2px solid #fff;
    border-bottom: 1px solid #111;
    min-height: 0;
}
.gutter {
    width: 24px;
    background: #f2f2f2;
    border-right: 1px solid #000;
    box-shadow: 1px 0 0 #777;
    position: relative;
    flex: none;
}
.sheet {
    flex: 1;
    background: #dcdcdc;
}

/* floating properties dialog */
.dialog {
    position: absolute;
    left: 742px;
    top: 183px;
    width: 771px;
    height: 390px;
    background: #ebebeb;
    border: 2px solid #e2e2e2;
    display: flex;
    flex-direction: column;
    padding: 0 6px 6px 5px;
}
.dlg-title {
    height: 27px;
    flex: none;
    display: flex;
    align-items: center;
    justify-content: center;
    font-size: 14px;
    letter-spacing: 0;
    color: #404040;
    position: relative;
    padding-bottom: 1px;
}
.dlg-close {
    position: absolute;
    right: 1px;
    top: 4px;
    width: 19px;
    height: 19px;
    background: #adadad;
    color: #fff;
    font-size: 12px;
    line-height: 17px;
    text-align: center;
}
.dlg-panel {
    flex: 1;
    background: #efefef;
    border: 2px solid #dedede;
    padding: 3px 4px 3px 2px;
    display: flex;
    flex-direction: column;
    min-height: 0;
}
.tabs {
    height: 22px;
    flex: none;
    display: flex;
    align-items: flex-end;
    padding-left: 2px;
    margin-bottom: -1px;
    position: relative;
}
.tab {
    height: 19px;
    width: 58px;
    border: 1px solid #a6a6a6;
    border-bottom: none;
    background: #e8e8e8;
    padding-left: 2px;
    line-height: 18px;
    color: #222;
    font-size: 12px;
    letter-spacing: -.2px;
}
.tab.active {
    height: 22px;
    width: 61px;
    line-height: 20px;
    background: #fff;
    border-width: 1px 1px 0;
    padding-bottom: 2px;
    letter-spacing: -.35px;
}
.tabbody {
    flex: 1;
    background: #fff;
    border: 2px solid #a9a9a9;
    display: flex;
    padding: 7px 2px 4px 4px;
    min-height: 0;
}
.rows {
    flex: 1;
    overflow: hidden;
    display: flex;
    flex-direction: column;
    gap: 2px;
}
.row {
    height: 23px;
    flex: none;
    display: flex;
}
.row label {
    width: 186px;
    margin-right: 4px;
    flex: none;
    padding-top: 6px;
    overflow: hidden;
    white-space: nowrap;
    line-height: 16px;
    color: #1e1e1e;
}
.row label::after {
    content: "................................................................";
}
.row label.blank::after {
    content: "";
}
.row input {
    width: 500px;
    height: 23px;
    flex: none;
    border: 1px solid #a6a6a6;
    outline: none;
    padding: 0 2px 1px;
    font: 11.500px "Noto Sans", sans-serif;
    letter-spacing: -.15px;
    color: #1e1e1e;
}
.row button {
    width: 19px;
    height: 19px;
    margin: 1px 0 0 6px;
    flex: none;
    border: 1px solid #a6a6a6;
    background: linear-gradient(#f2f2f2, #e4e4e4);
    font: bold 10px "Noto Sans", sans-serif;
    color: #222;
    line-height: 12px;
}
.dlg-scroll {
    width: 16px;
    flex: none;
    margin-left: 6px;
    background: #efefef;
    display: flex;
    flex-direction: column;
    align-items: center;
}
.dlg-arrow {
    width: 9px;
    height: 6px;
    margin: 6px 0 5px;
    flex: none;
}
.dlg-thumb {
    width: 15px;
    height: 216px;
    margin-right: 1px;
    background: #cdcdcd;
    flex: none;
}
.dlg-arrow.down {
    margin: auto 0 5px;
}

/* record bar and scrollbar under document */
.hbar {
    height: 17px;
    flex: none;
    display: flex;
}
.recbar {
    width: 341px;
    flex: none;
    display: flex;
    background: #f0f0f0;
    color: #808080;
    line-height: 16px;
    letter-spacing: 0;
}
.rec-label {
    width: 56px;
    padding-left: 1px;
    border-right: 1px solid #111;
    overflow: hidden;
}
.rec-input {
    width: 53px;
    background: #fff;
    border-right: 1px solid #111;
}
.rec-von {
    padding-left: 3px;
    width: 149px;
}
.rec-nav {
    display: flex;
    gap: 5px;
    align-items: center;
}
.rec-nav svg {
    width: 12px;
    height: 12px;
}
.hscroll {
    flex: 1;
    display: flex;
    align-items: center;
    background: #f0f0f0;
    border-top: 1px solid #fff;
    margin-top: -1px;
    height: 18px;
    padding-left: 5px;
}
.hthumb {
    width: 296px;
    height: 17px;
    margin-left: 4px;
    background: #cdcdcd;
}
.hright {
    margin-left: auto;
    margin-right: 7px;
}

/* orange band */
.strip {
    height: 18px;
    flex: none;
    border-top: 1px solid #a8a8a8;
    border-bottom: 1px solid #a8a8a8;
    background:
        radial-gradient(circle, #cdbfa8 .7px, transparent 1px) 0 13px / 7.500px 3px repeat-x,
        radial-gradient(circle, #cdbfa8 .7px, transparent 1px) 16px 0 / 37.800px 6px,
        #fdc997;
    display: flex;
    align-items: center;
    padding-left: 145px;
}
.radio {
    width: 12px;
    height: 12px;
    border-radius: 50%;
    background: #fff;
    border: 1px solid #999;
    box-shadow: inset 0 0 0 2px #fff, inset 0 0 0 5px #111;
    flex: none;
}
.opti {
    width: 22px;
    margin-left: 5px;
    color: #3a0a3a;
    flex: none;
}
.slider {
    margin: -3px 0 0 21px;
}

/* right hand scrollbar */
.vscroll {
    width: 18px;
    flex: none;
    background: #f0f0f0;
    display: flex;
    flex-direction: column;
    align-items: center;
    padding-right: 3px;
}
.up {
    margin-top: 8px;
    flex: none;
}
.vthumb {
    width: 15px;
    height: 718px;
    margin-top: 45px;
    background: #cdcdcd;
    flex: none;
}
.dn {
    margin: 8px 0 7px;
    flex: none;
}
.pagebtn {
    width: 15px;
    height: 15px;
    margin-bottom: 2px;
    border: 1px solid #aaa;
    display: flex;
    align-items: center;
    justify-content: center;
    flex: none;
}

/* bottom toolbar */
.bottom {
    height: 30px;
    padding: 1px 0 0 3px;
    background: #f0f0f0;
    flex: none;
}
.grip {
    width: 16px;
    margin: 3px 0;
    background: radial-gradient(circle, #777 .7px, transparent 1px) center 0 / 3px 3px repeat-y;
    flex: none;
}
.foot {
    flex: 1;
    border-top: 1px solid #a4a4a4;
    background: #f0f0f0;
}
```
